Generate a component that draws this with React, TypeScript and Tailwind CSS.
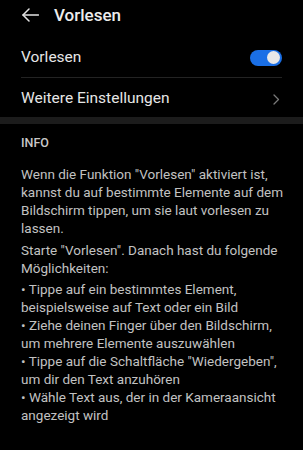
import React from "react";

export default function App() {
  return (
    <div
      className="w-[303px] h-[450px] bg-black overflow-hidden"
      style={{ fontFamily: "Roboto, 'Noto Sans', sans-serif" }}
    >
      {/* Header */}
      <div className="h-[30px] flex items-center pl-[22px]">
        <svg width="17" height="14" viewBox="0 0 17 14" fill="none" className="shrink-0">
          <path d="M1 7 H16.5" stroke="#e4e4e4" strokeWidth="1.5" strokeLinecap="round" />
          <path d="M7 1 L1 7 L7 13" stroke="#e4e4e4" strokeWidth="1.5" strokeLinecap="round" strokeLinejoin="round" />
        </svg>
        <span className="ml-[15px] text-[17px] font-medium text-[#ededed] leading-none">Vorlesen</span>
      </div>

      {/* Settings rows */}
      <div className="mt-[8px] px-[21px]">
        <div className="h-[40px] flex items-center justify-between border-b border-[#232323]">
          <span className="text-[15.5px] text-[#e6e6e6]">Vorlesen</span>
          <div className="w-[32px] h-[16px] rounded-full bg-[#1a6fe6] flex items-center justify-end pr-[2px]">
            <div className="w-[13px] h-[13px] rounded-full bg-[#e8e8e8]" />
          </div>
        </div>
        <div className="h-[39px] pt-[3px] flex items-center justify-between">
          <span className="text-[15.5px] text-[#e6e6e6]">Weitere Einstellungen</span>
          <svg width="7" height="11" viewBox="0 0 7 11" fill="none" className="mr-[2px]">
            <path d="M1 1 L5.5 5.5 L1 10" stroke="#7a7a7a" strokeWidth="1.3" strokeLinecap="round" strokeLinejoin="round" />
          </svg>
        </div>
      </div>

      {/* Band */}
      <div className="h-[7px] bg-[#1c1c1c]" />

      {/* Info */}
      <div className="px-[21px] pt-[10px]">
        <div className="text-[12.5px] font-medium leading-[18px] text-[#c8c8c8]">INFO</div>
        <div className="mt-[13px] text-[13.5px] leading-[18px] text-[#c2c2c2] whitespace-nowrap">
          <p>
            Wenn die Funktion "Vorlesen" aktiviert ist,
            <br />
            kannst du auf bestimmte Elemente auf dem
            <br />
            Bildschirm tippen, um sie laut vorlesen zu
            <br />
            lassen.
          </p>
          <p className="mt-[4px]">
            Starte "Vorlesen". Danach hast du folgende
            <br />
            Möglichkeiten:
          </p>
          <p className="mt-[3px]">
            • Tippe auf ein bestimmtes Element,
            <br />
            beispielsweise auf Text oder ein Bild
            <br />
            • Ziehe deinen Finger über den Bildschirm,
            <br />
            um mehrere Elemente auszuwählen
            <br />
            • Tippe auf die Schaltfläche "Wiedergeben",
            <br />
            um dir den Text anzuhören
            <br />
            • Wähle Text aus, der in der Kameraansicht
            <br />
            angezeigt wird
          </p>
        </div>
      </div>
    </div>
  );
}
